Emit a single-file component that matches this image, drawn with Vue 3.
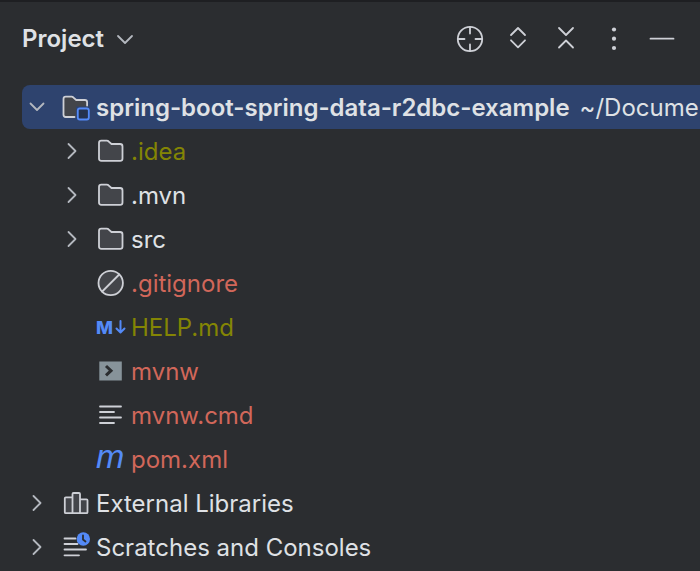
<script setup>
import { ref } from 'vue'

const selected = ref('root')

const rows = [
  {
    id: 'root',
    name: 'spring-boot-spring-data-r2dbc-example',
    path: '~/Documents',
    icon: 'module',
    level: 0,
    arrow: 'down',
  },
  { id: 'idea', name: '.idea', icon: 'folder', level: 1, arrow: 'right', status: 'ignored' },
  { id: 'mvn', name: '.mvn', icon: 'folder', level: 1, arrow: 'right' },
  { id: 'src', name: 'src', icon: 'folder', level: 1, arrow: 'right' },
  { id: 'gitignore', name: '.gitignore', icon: 'gitignore', level: 1, status: 'untracked' },
  { id: 'help', name: 'HELP.md', icon: 'markdown', level: 1, status: 'ignored' },
  { id: 'mvnw', name: 'mvnw', icon: 'shell', level: 1, status: 'untracked' },
  { id: 'mvnwcmd', name: 'mvnw.cmd', icon: 'text', level: 1, status: 'untracked' },
  { id: 'pom', name: 'pom.xml', icon: 'maven', level: 1, status: 'untracked' },
  { id: 'libraries', name: 'External Libraries', icon: 'library', level: 0, arrow: 'right' },
  { id: 'scratches', name: 'Scratches and Consoles', icon: 'scratches', level: 0, arrow: 'right' },
]
</script>

<template>
  <section class="project">
    <header class="project__header">
      <button class="project__title">
        Project
        <svg class="icon icon--dim" viewBox="0 0 28 28"><path d="M7 11l7 7 7-7" /></svg>
      </button>

      <div class="project__actions">
        <button class="action" aria-label="Select opened file">
          <svg class="icon" viewBox="0 0 28 28">
            <circle cx="14" cy="14" r="12.2" />
            <path d="M14 2v6.500M14 19.500v6.500M2 14h6.500M19.500 14h6.500" />
          </svg>
        </button>
        <button class="action" aria-label="Expand all">
          <svg class="icon" viewBox="0 0 28 28">
            <path d="M7 10l7-7 7 7M7 15.300l7 7 7-7" />
          </svg>
        </button>
        <button class="action" aria-label="Collapse all">
          <svg class="icon" viewBox="0 0 28 28">
            <path d="M7 3l7 7 7-7M7 22.500l7-7 7 7" />
          </svg>
        </button>
        <button class="action" aria-label="Options">
          <svg class="icon" viewBox="0 0 28 28">
            <g class="solid">
              <circle cx="14" cy="4.5" r="2.1" />
              <circle cx="14" cy="13.7" r="2.1" />
              <circle cx="14" cy="23" r="2.1" />
            </g>
          </svg>
        </button>
        <button class="action" aria-label="Hide">
          <svg class="icon" viewBox="0 0 28 28"><path d="M2.500 13.700h23" /></svg>
        </button>
      </div>
    </header>

    <ul class="tree">
      <li
        v-for="row in rows"
        :key="row.id"
        class="row"
        :class="{ 'row--child': row.level === 1, 'row--selected': selected === row.id }"
        @click="selected = row.id"
      >
        <button v-if="row.arrow" class="row__arrow" :aria-label="'Toggle ' + row.name">
          <svg class="icon icon--dim" viewBox="0 0 28 28">
            <path v-if="row.arrow === 'down'" d="M7.500 10.500l6.500 6.500 6.500-6.500" />
            <path v-else d="M10.500 7l7 7-7 7" />
          </svg>
        </button>
        <span v-else class="row__arrow"></span>

        <svg class="icon" viewBox="0 0 28 28">
          <g v-if="row.icon === 'folder'">
            <path
              class="filled"
              d="M2 6q0-2.300 2.300-2.300h5.600q.9 0 1.600.6l3 2.700h8.600q2.400 0 2.400 2.400v12q0 2.400-2.400 2.400H4.400q-2.400 0-2.400-2.400z"
            />
          </g>

          <g v-else-if="row.icon === 'module'">
            <path class="filled no-stroke" d="M1.500 3.700h9l4 3.300h11v6.500H14v10.300H1.500z" />
            <path
              d="M12.500 24H3.700q-2.200 0-2.200-2.200V6q0-2.300 2.300-2.300h5.800q.9 0 1.600.6l3 2.700h8.600q2.300 0 2.300 2.300v3.200"
            />
            <rect class="badge" x="15.800" y="15.500" width="11" height="11" rx="2" />
          </g>

          <g v-else-if="row.icon === 'gitignore'">
            <circle class="filled" cx="13.700" cy="14" r="12.2" />
            <path d="M5.200 22.500l17-17" />
          </g>

          <g v-else-if="row.icon === 'markdown'">
            <text class="md" x="-1" y="20.500">M</text>
            <path class="blue" d="M23.500 8v11M19.500 15.500l4 4 4-4" />
          </g>

          <g v-else-if="row.icon === 'shell'">
            <rect class="shell" x="2.300" y="4.500" width="22.500" height="19" />
            <path class="prompt" d="M9 9l5 4.700-5 4.700" />
          </g>

          <path v-else-if="row.icon === 'text'" d="M3 5.500h21M3 11h14M3 16.500h21M3 22h14" />

          <text v-else-if="row.icon === 'maven'" class="maven" x="-1" y="23">m</text>

          <g v-else-if="row.icon === 'library'">
            <path
              class="filled"
              d="M2.800 9.300q0-1 1-1h6.700v15.900H3.800q-1 0-1-1zM10.500 5q0-1 1-1h5.500q1 0 1 1v19.200h-7.500zM18 10.300h6.500q1 0 1 1v11.900q0 1-1 1H18z"
            />
          </g>

          <g v-else-if="row.icon === 'scratches'">
            <path d="M2.500 5.500h11M2.500 11h13M2.500 16.500h21.500M2.500 22.300h14.500" />
            <circle class="clock" cx="21.300" cy="6" r="6.700" />
            <path class="hands" d="M21 2.500v4l2.500 2" />
          </g>
        </svg>

        <span class="row__name" :class="row.status">{{ row.name }}</span>
        <span v-if="row.path" class="row__path">{{ row.path }}</span>
      </li>
    </ul>
  </section>
</template>

<style>
body {
  background-color: #2b2d30;
}
</style>

<style scoped>
.project {
  min-height: 100vh;
  box-sizing: border-box;
  overflow: hidden;
  border-top: 2px solid #1e1f22;
  background-color: #2b2d30;
  color: #dfe1e5;
  font-family: Inter, 'Liberation Sans', sans-serif;
  font-size: 24px;
  line-height: 28px;
}

button {
  padding: 0;
  border: none;
  background: none;
  color: inherit;
  font: inherit;
  cursor: pointer;
}

/* HEADER ----------------------------- */
.project__header {
  display: flex;
  justify-content: space-between;
  align-items: center;
  height: 74px;
  padding: 0 24px 0 22px;
}

.project__title {
  display: flex;
  align-items: center;
  gap: 7px;
  font-weight: 600;
}

.project__actions {
  display: flex;
  gap: 20px;
}

.action {
  display: flex;
}

/* TREE ----------------------------- */
.tree {
  margin: 0;
  padding: 9px 0 0 22px;
  list-style: none;
}

.row {
  display: flex;
  align-items: center;
  height: 44px;
  border-radius: 8px 0 0 8px;
  white-space: nowrap;
}

.row--child {
  padding-left: 35px;
}

.row--selected {
  background-color: #2e436e;
}

.row--selected .row__name {
  font-weight: 600;
}

.row__arrow {
  display: flex;
  justify-content: center;
  flex-shrink: 0;
  width: 30px;
  margin-right: 10px;
}

.row__name,
.row__path {
  padding-top: 1px;
}

.row__name {
  margin-left: 6px;
}

.row__path {
  margin-left: 10px;
}

.ignored {
  color: #848504;
}

.untracked {
  color: #d1675a;
}

/* ICONS ----------------------------- */
.icon {
  flex-shrink: 0;
  width: 28px;
  height: 28px;
  overflow: visible;
  fill: none;
  stroke: #ced0d6;
  stroke-width: 1.8;
  stroke-linecap: round;
  stroke-linejoin: round;
}

.icon--dim {
  stroke: #b4b8bf;
}

.filled {
  fill: #43454a;
}

.no-stroke {
  stroke: none;
}

.solid {
  fill: #ced0d6;
  stroke: none;
}

.badge {
  fill: #25324d;
  stroke: #548af7;
}

.blue {
  stroke: #548af7;
  stroke-width: 2;
}

.md,
.maven {
  fill: #548af7;
  stroke: none;
}

.md {
  font-size: 18px;
  font-weight: 800;
}

.maven {
  font-family: 'Liberation Sans', sans-serif;
  font-size: 34px;
  font-style: italic;
}

.shell {
  fill: #87939a;
  stroke: none;
}

.prompt {
  stroke: #2b2d30;
  stroke-width: 3;
  stroke-linecap: butt;
  stroke-linejoin: miter;
}

.clock {
  fill: #548af7;
  stroke: none;
}

.hands {
  stroke: #2b2d30;
}
</style>
